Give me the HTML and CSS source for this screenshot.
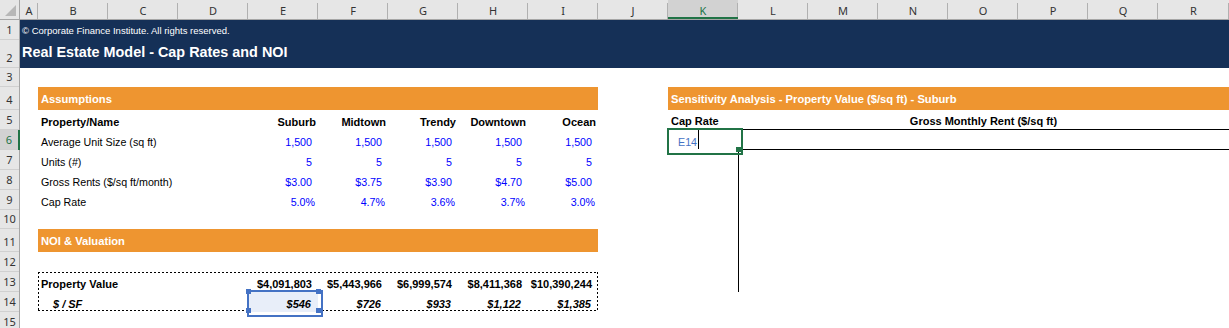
FILE: index.html
```html
<!DOCTYPE html>
<html lang="en">
<head>
<meta charset="utf-8">
<title>Real Estate Model - Cap Rates and NOI</title>
<link rel="stylesheet" href="styles.css">
</head>
<body>
<div class="sheet">
  <div class="row hdr">
    <div class="corner"><svg width="19" height="19" viewBox="0 0 19 19"><polygon points="5,16 16,16 16,5" fill="#b7b7b7"/></svg></div>
    <div class="ch a">A</div>
    <div class="ch">B</div>
    <div class="ch">C</div>
    <div class="ch">D</div>
    <div class="ch">E</div>
    <div class="ch">F</div>
    <div class="ch">G</div>
    <div class="ch">H</div>
    <div class="ch">I</div>
    <div class="ch">J</div>
    <div class="ch sel">K</div>
    <div class="ch">L</div>
    <div class="ch">M</div>
    <div class="ch">N</div>
    <div class="ch">O</div>
    <div class="ch">P</div>
    <div class="ch">Q</div>
    <div class="ch last">R</div>
  </div>

  <div class="row">
    <div class="rh">1</div>
    <div class="band copy">© Corporate Finance Institute. All rights reserved.</div>
  </div>
  <div class="row h28">
    <div class="rh">2</div>
    <div class="band title">Real Estate Model - Cap Rates and NOI</div>
  </div>
  <div class="row h19">
    <div class="rh">3</div>
  </div>
  <div class="row h23">
    <div class="rh">4</div>
    <div class="ca"></div>
    <div class="c8 cell orange">Assumptions</div>
    <div class="c"></div>
    <div class="rest cell orange">Sensitivity Analysis - Property Value ($/sq ft) - Suburb</div>
  </div>
  <div class="row">
    <div class="rh">5</div>
    <div class="ca"></div>
    <div class="c3 cell l b">Property/Name</div>
    <div class="c cell r hd b">Suburb</div>
    <div class="c cell r hd b">Midtown</div>
    <div class="c cell r hd b">Trendy</div>
    <div class="c cell r hd b">Downtown</div>
    <div class="c cell r hd b">Ocean</div>
    <div class="c"></div>
    <div class="c cell l b bb">Cap Rate</div>
    <div class="rest cell ctr b bb">Gross Monthly Rent ($/sq ft)</div>
  </div>
  <div class="row">
    <div class="rh sel">6</div>
    <div class="ca"></div>
    <div class="c3 cell l">Average Unit Size (sq ft)</div>
    <div class="c cell r blue">1,500</div>
    <div class="c cell r blue">1,500</div>
    <div class="c cell r blue">1,500</div>
    <div class="c cell r blue">1,500</div>
    <div class="c cell r blue">1,500</div>
    <div class="c"></div>
    <div class="c cell edit"><span class="ref">E14</span><span class="caret"></span></div>
    <div class="rest bb"></div>
  </div>
  <div class="row">
    <div class="rh">7</div>
    <div class="ca"></div>
    <div class="c3 cell l">Units (#)</div>
    <div class="c cell r blue">5</div>
    <div class="c cell r blue">5</div>
    <div class="c cell r blue">5</div>
    <div class="c cell r blue">5</div>
    <div class="c cell r blue">5</div>
    <div class="c"></div>
    <div class="c"></div>
    <div class="rest bl"></div>
  </div>
  <div class="row">
    <div class="rh">8</div>
    <div class="ca"></div>
    <div class="c3 cell l">Gross Rents ($/sq ft/month)</div>
    <div class="c cell r blue">$3.00</div>
    <div class="c cell r blue">$3.75</div>
    <div class="c cell r blue">$3.90</div>
    <div class="c cell r blue">$4.70</div>
    <div class="c cell r blue">$5.00</div>
    <div class="c"></div>
    <div class="c"></div>
    <div class="rest bl"></div>
  </div>
  <div class="row">
    <div class="rh">9</div>
    <div class="ca"></div>
    <div class="c3 cell l">Cap Rate</div>
    <div class="c cell r pc blue">5.0%</div>
    <div class="c cell r pc blue">4.7%</div>
    <div class="c cell r pc blue">3.6%</div>
    <div class="c cell r pc blue">3.7%</div>
    <div class="c cell r pc blue">3.0%</div>
    <div class="c"></div>
    <div class="c"></div>
    <div class="rest bl"></div>
  </div>
  <div class="row h19">
    <div class="rh">10</div>
    <div class="ca"></div>
    <div class="c8"></div>
    <div class="c"></div>
    <div class="c"></div>
    <div class="rest bl"></div>
  </div>
  <div class="row h23">
    <div class="rh">11</div>
    <div class="ca"></div>
    <div class="c8 cell orange">NOI &amp; Valuation</div>
    <div class="c"></div>
    <div class="c"></div>
    <div class="rest bl"></div>
  </div>
  <div class="row">
    <div class="rh">12</div>
    <div class="ca"></div>
    <div class="c8"></div>
    <div class="c"></div>
    <div class="c"></div>
    <div class="rest bl"></div>
  </div>
  <div class="row">
    <div class="rh">13</div>
    <div class="ca"></div>
    <div class="c3 cell l b marquee">Property Value</div>
    <div class="c cell r b">$4,091,803</div>
    <div class="c cell r b">$5,443,966</div>
    <div class="c cell r b">$6,999,574</div>
    <div class="c cell r b">$8,411,368</div>
    <div class="c cell r b">$10,390,244</div>
    <div class="c"></div>
    <div class="c"></div>
    <div class="rest bl"></div>
  </div>
  <div class="row">
    <div class="rh">14</div>
    <div class="ca"></div>
    <div class="c3 cell ind b i">$ / SF</div>
    <div class="c cell r it b i hl">$546</div>
    <div class="c cell r it b i">$726</div>
    <div class="c cell r it b i">$933</div>
    <div class="c cell r it b i">$1,122</div>
    <div class="c cell r it b i">$1,385</div>
  </div>
  <div class="row">
    <div class="rh">15</div>
  </div>
</div>
</body>
</html>
```

FILE: styles.css
```css
* {
  box-sizing: border-box;
  margin: 0;
  padding: 0;
}

html, body {
  width: 1229px;
  height: 328px;
  overflow: hidden;
  background: #fff;
}

body {
  font-family: "Liberation Sans", Arial, sans-serif;
  font-size: 10.7px;
  color: #000;
}

.sheet {
  display: flex;
  flex-direction: column;
  width: 1229px;
}

.row {
  display: flex;
  flex: none;
  height: 20px;
}

.h19 { height: 19px; }
.h23 { height: 23px; }
.h28 { height: 28px; }

/* column header */
.hdr {
  height: 20px;
  background: #e6e6e6;
  border-bottom: 1px solid #a6a6a6;
}

.corner {
  width: 20px;
  flex: none;
  border-right: 1px solid #a6a6a6;
  display: flex;
}

.ch {
  width: 70px;
  flex: none;
  display: flex;
  align-items: center;
  justify-content: center;
  padding-top: 1px;
  font-family: "Noto Sans", sans-serif;
  font-size: 11px;
  color: #333;
  background-image: linear-gradient(#b0b0b0, #b0b0b0);
  background-repeat: no-repeat;
  background-position: right 3px;
  background-size: 1px calc(100% - 3px);
}

.ch.a { width: 18px; }
.ch.last { flex: 1; }

.ch.sel {
  background-color: #d2d2d2;
  color: #217346;
  box-shadow: inset 0 -2px #217346;
}

/* row header */
.rh {
  width: 20px;
  flex: none;
  display: flex;
  align-items: flex-end;
  justify-content: center;
  padding-bottom: 3px;
  line-height: 14px;
  background: #e6e6e6;
  border-right: 1px solid #a6a6a6;
  box-shadow: inset 0 -1px #d0d0d0;
  font-family: "Noto Sans", sans-serif;
  font-size: 11px;
  color: #333;
}

.rh.sel {
  background-color: #d2d2d2;
  color: #217346;
  border-right: 2px solid #217346;
}

/* title band */
.band {
  flex: 1;
  display: flex;
  align-items: center;
  padding-left: 2px;
  background: #153057;
  color: #fff;
  white-space: nowrap;
}

.copy { font-size: 9.5px; }

.title {
  font-size: 14.4px;
  font-weight: bold;
  padding-bottom: 4px;
}

/* cells */
.ca { width: 18px; flex: none; }
.c { width: 70px; flex: none; }
.c3 { width: 210px; flex: none; }
.c8 { width: 560px; flex: none; }
.rest { flex: 1; }

.cell {
  display: flex;
  align-items: flex-end;
  padding-bottom: 2px;
  white-space: nowrap;
}

.l { padding-left: 3px; }
.ind { padding-left: 15px; }
.r { justify-content: flex-end; padding-right: 6px; }
.r.hd { padding-right: 2px; }
.r.pc { padding-right: 3px; }
.r.it { padding-right: 7px; }
.ctr { justify-content: center; }

.b { font-weight: bold; font-size: 11px; }
.i { font-style: italic; }
.blue { color: #0000ff; }

.orange {
  align-items: center;
  padding: 0 0 0 3px;
  background: #ee9530;
  color: #fff;
  font-weight: bold;
  font-size: 11.2px;
}

.bb { border-bottom: 1px solid #000; }
.bl { border-left: 1px solid #000; }

/* active (editing) cell K6 */
.edit {
  position: relative;
  padding-left: 10px;
}

.edit .ref { color: #4472c4; }

.edit .caret {
  align-self: stretch;
  width: 1px;
  margin: 0 0 -1px 1px;
  background: #000;
}

.edit::after {
  content: "";
  position: absolute;
  left: -1px;
  top: -2px;
  width: 72px;
  height: 23px;
  border: 2px solid #217346;
}

.edit::before {
  content: "";
  position: absolute;
  left: 68px;
  top: 17px;
  width: 5px;
  height: 5px;
  background: #217346;
  z-index: 1;
}

/* copy marquee B13:I14 */
.marquee { position: relative; }

.marquee::after {
  content: "";
  position: absolute;
  left: 0;
  top: 0;
  width: 560px;
  height: 39px;
  background:
    repeating-linear-gradient(90deg, #000 0 2px, transparent 2px 4px) left top / 100% 1px no-repeat,
    repeating-linear-gradient(90deg, #000 0 2px, transparent 2px 4px) left bottom / 100% 1px no-repeat,
    repeating-linear-gradient(180deg, #000 0 2px, transparent 2px 4px) left top / 1px 100% no-repeat,
    repeating-linear-gradient(180deg, #000 0 2px, transparent 2px 4px) right top / 1px 100% no-repeat;
}

/* range-finder highlight on E14 */
.hl {
  position: relative;
  background: #e8eef9;
}

.hl::before {
  content: "";
  position: absolute;
  left: -1px;
  top: -2px;
  width: 72px;
  height: 23px;
  border: 2px solid #4472c4;
}

.hl::after {
  content: "";
  position: absolute;
  left: -2px;
  top: -3px;
  width: 5px;
  height: 5px;
  background: #4472c4;
  box-shadow: 70px 0 #4472c4, 0 19px #4472c4, 70px 19px #4472c4;
}
```
